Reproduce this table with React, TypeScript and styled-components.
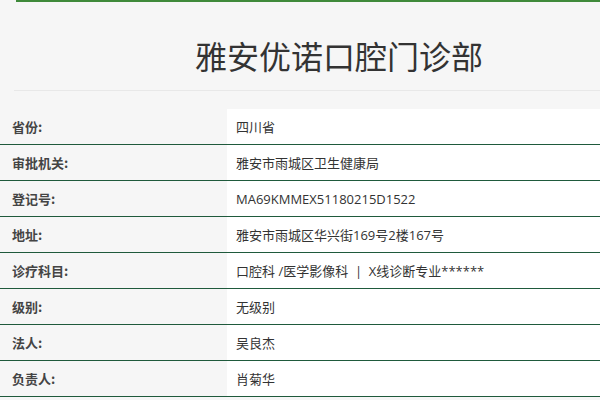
import React from "react";
import styled, { createGlobalStyle } from "styled-components";

const Global = createGlobalStyle`
  html, body { margin: 0; padding: 0; background: #f6f6f6; }
  body { font-family: "Microsoft YaHei", "Open Sans", "Noto Sans CJK SC", sans-serif; color: #333; }
`;

const Page = styled.div`
  width: 600px;
  height: 400px;
  overflow: hidden;
  background: #f6f6f6;
  display: flex;
  flex-direction: column;
`;

const TopBar = styled.div`
  height: 2px;
  margin-left: 16px;
  background: #3f8a3a;
`;

const Header = styled.div`
  height: 88px;
  margin-left: 14px;
  padding-left: 64px;
  border-bottom: 1px solid #e8e8e8;
  display: flex;
  align-items: center;
  justify-content: center;
`;

const Title = styled.h1`
  margin: 0;
  padding-top: 18px;
  font-size: 32px;
  font-weight: 400;
  color: #333;
  font-family: "Microsoft YaHei", "Noto Sans CJK SC", sans-serif;
`;

const Table = styled.div`
  margin-top: 18px;
  display: flex;
  flex-direction: column;
`;

const Row = styled.div`
  display: grid;
  grid-template-columns: 227px 1fr;
  height: 35px;
  border-bottom: 1px solid #1f5a3c;
`;

const Label = styled.div`
  display: flex;
  align-items: center;
  padding-left: 12px;
  font-size: 13px;
  font-weight: 700;
  color: #444;
  font-family: "Microsoft YaHei", "Noto Sans CJK SC", sans-serif;
`;

const Value = styled.div`
  display: flex;
  align-items: center;
  padding-left: 9px;
  background: #fff;
  font-size: 13px;
  color: #333;
  font-family: "Open Sans", "Noto Sans CJK SC", sans-serif;
  white-space: pre;
`;

const rows: [string, string][] = [
  ["省份:", "四川省"],
  ["审批机关:", "雅安市雨城区卫生健康局"],
  ["登记号:", "MA69KMMEX51180215D1522"],
  ["地址:", "雅安市雨城区华兴街169号2楼167号"],
  ["诊疗科目:", "口腔科 /医学影像科  |  X线诊断专业******"],
  ["级别:", "无级别"],
  ["法人:", "吴良杰"],
  ["负责人:", "肖菊华"],
];

export default function App() {
  return (
    <Page>
      <Global />
      <TopBar />
      <Header>
        <Title>雅安优诺口腔门诊部</Title>
      </Header>
      <Table>
        {rows.map(([k, v]) => (
          <Row key={k}>
            <Label>{k}</Label>
            <Value>{v}</Value>
          </Row>
        ))}
      </Table>
    </Page>
  );
}
